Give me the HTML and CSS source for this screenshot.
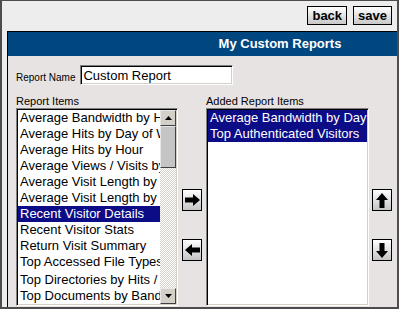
FILE: index.html
```html
<!DOCTYPE html>
<html lang="en">
<head>
    <meta charset="UTF-8">
    <title>My Custom Reports</title>
    <link rel="stylesheet" href="styles.css">
</head>
<body>
    <div class="frame">
        <div class="toolbar">
            <button class="tool-btn">back</button>
            <button class="tool-btn">save</button>
        </div>

        <div class="panel">
            <div class="panel-head">My Custom Reports</div>
            <div class="panel-body">
                <div class="name-row">
                    <label for="report-name">Report Name</label>
                    <input type="text" id="report-name" value="Custom Report">
                </div>

                <div class="lists">
                    <div class="list-col">
                        <div class="list-label">Report Items</div>
                        <div class="listbox listbox-left">
                            <ul class="items">
                                <li>Average Bandwidth by Hour</li>
                                <li>Average Hits by Day of Week</li>
                                <li>Average Hits by Hour</li>
                                <li>Average Views / Visits by Day</li>
                                <li>Average Visit Length by Day</li>
                                <li>Average Visit Length by Hour</li>
                                <li class="selected">Recent Visitor Details</li>
                                <li>Recent Visitor Stats</li>
                                <li>Return Visit Summary</li>
                                <li>Top Accessed File Types</li>
                                <li class="shifted">Top Directories by Hits / Views</li>
                                <li>Top Documents by Bandwidth</li>
                            </ul>
                            <div class="scrollbar">
                                <div class="sb-btn">
                                    <svg width="7" height="4" viewBox="0 0 7 4"><path d="M3.5 0L7 4H0z" fill="#000"/></svg>
                                </div>
                                <div class="sb-track"><div class="sb-thumb"></div></div>
                                <div class="sb-btn">
                                    <svg width="7" height="4" viewBox="0 0 7 4"><path d="M0 0h7L3.5 4z" fill="#000"/></svg>
                                </div>
                            </div>
                        </div>
                    </div>

                    <div class="move-col">
                        <button class="move-btn" title="Add">
                            <svg width="15" height="12" viewBox="0 0 15 12"><path d="M0 3.5h8V0l7 6-7 6V8.5H0z" fill="#000"/></svg>
                        </button>
                        <button class="move-btn" title="Remove">
                            <svg width="15" height="12" viewBox="0 0 15 12"><path d="M15 3.5H7V0L0 6l7 6V8.5h8z" fill="#000"/></svg>
                        </button>
                    </div>

                    <div class="list-col">
                        <div class="list-label">Added Report Items</div>
                        <div class="listbox listbox-right">
                            <ul class="items">
                                <li class="selected">Average Bandwidth by Day</li>
                                <li class="selected">Top Authenticated Visitors</li>
                            </ul>
                        </div>
                    </div>

                    <div class="move-col move-col-last">
                        <button class="move-btn" title="Move up">
                            <svg width="12" height="15" viewBox="0 0 12 15"><path d="M6 0l6 7H8.5v8h-5V7H0z" fill="#000"/></svg>
                        </button>
                        <button class="move-btn" title="Move down">
                            <svg width="12" height="15" viewBox="0 0 12 15"><path d="M6 15l6-7H8.5V0h-5v8H0z" fill="#000"/></svg>
                        </button>
                    </div>
                </div>
            </div>
        </div>
    </div>
</body>
</html>
```

FILE: styles.css
```css
body {
    margin: 0;
    font-family: 'Liberation Sans', Arial, sans-serif;
    color: #000;
}

.frame {
    height: 309px;
    box-sizing: border-box;
    border-style: solid;
    border-color: #4d4d4d;
    border-width: 1px 2px 2px 2px;
    background-color: #ededed;
    overflow: hidden;
}

.toolbar {
    display: flex;
    justify-content: flex-end;
    gap: 6px;
    padding: 5px 5px 0 0;
}

.tool-btn {
    height: 19px;
    padding: 0 4px;
    border: 1px solid #000;
    border-radius: 0;
    background: linear-gradient(#ffffff, #c8c8c8);
    font-family: 'Liberation Sans', Arial, sans-serif;
    font-size: 13px;
    font-weight: bold;
    line-height: 17px;
    color: #000;
}

.panel {
    margin: 6px 0 0 5px;
    border-top: 1px solid #000;
    border-left: 1px solid #000;
    background-color: #e7e3e3;
    height: 400px;
}

.panel-head {
    height: 24px;
    line-height: 24px;
    padding-left: 155px;
    background-color: #00467f;
    color: #fff;
    font-size: 13px;
    font-weight: bold;
    text-align: center;
}

.panel-body {
    padding: 9px 0 0 8px;
}

.name-row {
    display: flex;
    align-items: flex-end;
    gap: 5px;
}

.name-row label {
    font-size: 10px;
    line-height: 13px;
    padding-bottom: 1px;
}

.name-row input {
    width: 153px;
    height: 20px;
    box-sizing: border-box;
    margin: 0;
    padding: 0 2px;
    border: 1px solid;
    border-color: #808080 #fff #fff #808080;
    box-shadow: inset 1px 1px #000, inset -1px -1px #d4d0c8;
    background-color: #fff;
    font-family: 'Liberation Sans', Arial, sans-serif;
    font-size: 13px;
    color: #000;
    outline: none;
}

.lists {
    display: flex;
    margin-top: 10px;
}

.list-label {
    font-size: 11px;
    line-height: 13px;
}

.listbox {
    display: flex;
    height: 198px;
    box-sizing: border-box;
    padding: 1px;
    border: 1px solid;
    border-color: #808080 #fff #fff #808080;
    box-shadow: inset 1px 1px #000, inset -1px -1px #d4d0c8;
    background-color: #fff;
}

.listbox-left {
    width: 162px;
}

.listbox-right {
    width: 163px;
}

.items {
    flex: 1;
    min-width: 0;
    margin: 0;
    padding: 0;
    list-style: none;
    overflow: hidden;
    font-size: 13px;
}

.items li {
    height: 16px;
    line-height: 16px;
    padding-left: 2px;
    white-space: nowrap;
    overflow: hidden;
}

.items li.selected {
    background-color: #0c0c86;
    color: #fff;
}

.items li.shifted {
    margin-top: 2px;
}

.scrollbar {
    display: flex;
    flex-direction: column;
    width: 16px;
}

.sb-btn {
    display: flex;
    align-items: center;
    justify-content: center;
    height: 16px;
    box-sizing: border-box;
    border: 1px solid;
    border-color: #e8e8e8 #404040 #404040 #e8e8e8;
    background-color: #d4d0c8;
}

.sb-track {
    flex: 1;
    background: repeating-conic-gradient(#d4d0c8 0 25%, #fff 0 50%) 0 0 / 2px 2px;
}

.sb-thumb {
    height: 42px;
    box-sizing: border-box;
    border: 1px solid;
    border-color: #e8e8e8 #404040 #404040 #e8e8e8;
    background-color: #c4c4c4;
}

.move-col {
    display: flex;
    flex-direction: column;
    gap: 28px;
    width: 20px;
    margin: 0 4px;
    padding-top: 94px;
}

.move-col-last {
    margin: 0 0 0 3px;
}

.move-btn {
    display: flex;
    align-items: center;
    justify-content: center;
    width: 20px;
    height: 22px;
    padding: 0;
    border: 1px solid #000;
    border-radius: 0;
    background: linear-gradient(#ffffff, #c4c4c4);
}
```
